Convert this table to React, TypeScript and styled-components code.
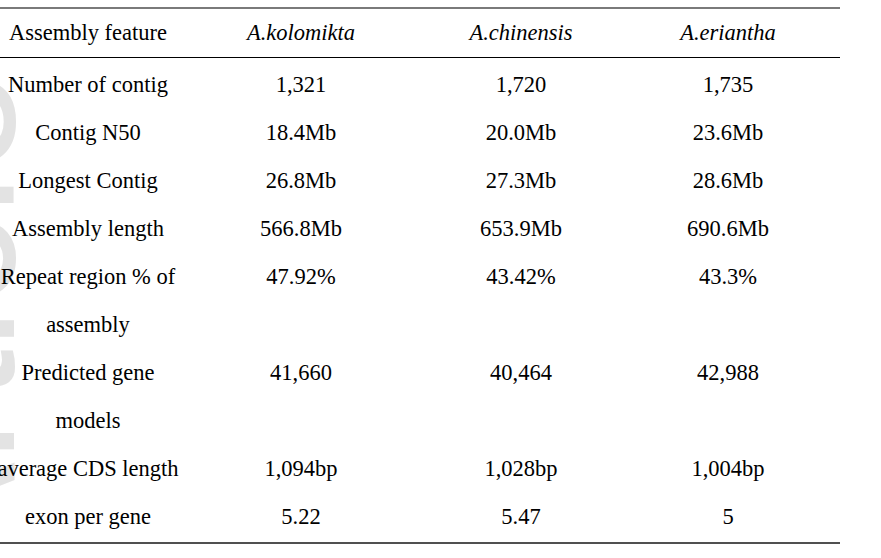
import styled, { createGlobalStyle } from 'styled-components'

const GlobalStyle = createGlobalStyle`
  html, body {
    margin: 0;
    padding: 0;
    background: #ffffff;
    overflow: hidden;
  }
`

type Row = { feature: string[]; values: string[] }

const species = ['A.kolomikta', 'A.chinensis', 'A.eriantha']

const rows: Row[] = [
  { feature: ['Number of contig'], values: ['1,321', '1,720', '1,735'] },
  { feature: ['Contig N50'], values: ['18.4Mb', '20.0Mb', '23.6Mb'] },
  { feature: ['Longest Contig'], values: ['26.8Mb', '27.3Mb', '28.6Mb'] },
  { feature: ['Assembly length'], values: ['566.8Mb', '653.9Mb', '690.6Mb'] },
  { feature: ['Repeat region % of', 'assembly'], values: ['47.92%', '43.42%', '43.3%'] },
  { feature: ['Predicted gene', 'models'], values: ['41,660', '40,464', '42,988'] },
  { feature: ['average CDS length'], values: ['1,094bp', '1,028bp', '1,004bp'] },
  { feature: ['exon per gene'], values: ['5.22', '5.47', '5'] }
]

export default function App() {
  return (
    <>
      <GlobalStyle />
      <Page>
        <Watermark aria-hidden="true">Accepted Article</Watermark>
        <Table>
          <HeaderRow>
            <Cell>
              <Line>Assembly feature</Line>
            </Cell>
            {species.map(name => (
              <Cell key={name}>
                <Line $italic>{name}</Line>
              </Cell>
            ))}
          </HeaderRow>
          <Body>
            {rows.map(row => (
              <BodyRow key={row.feature[0]}>
                <Cell>
                  {row.feature.map(text => (
                    <Line key={text}>{text}</Line>
                  ))}
                </Cell>
                {row.values.map((value, i) => (
                  <Cell key={i}>
                    <Line>{value}</Line>
                  </Cell>
                ))}
              </BodyRow>
            ))}
          </Body>
        </Table>
      </Page>
    </>
  )
}

const Page = styled.div`
  position: relative;
  width: 881px;
  height: 558px;
  padding-top: 7px;
  box-sizing: border-box;
  overflow: hidden;
`

// faint "Accepted Article" stamp running up the left margin, mostly cut off
const Watermark = styled.div`
  position: absolute;
  left: -142px;
  top: 1398px;
  transform-origin: 0 0;
  transform: rotate(-90deg);
  font-family: 'Liberation Sans', sans-serif;
  font-size: 185px;
  line-height: 1;
  white-space: nowrap;
  color: #e3e3e3;
`

const Table = styled.div`
  position: relative;
  width: 840px;
  color: #000000;
`

const HeaderRow = styled.div`
  display: grid;
  grid-template-columns: 176px 250px 190px 224px;
  border-top: 2px solid #7a7a7a;
  border-bottom: 1px solid #000000;
`

const Body = styled.div`
  padding: 3px 0 1px;
  border-bottom: 2px solid #505050;
`

const BodyRow = styled.div`
  display: grid;
  grid-template-columns: 176px 250px 190px 224px;
`

const Cell = styled.div`
  display: flex;
  flex-direction: column;
  align-items: center;
  min-width: 0;
`

const Line = styled.span<{ $italic?: boolean }>`
  display: block;
  font-family: 'Liberation Serif', 'Times New Roman', serif;
  font-size: 22.5px;
  line-height: 48px;
  white-space: nowrap;
  font-style: ${p => (p.$italic ? 'italic' : 'normal')};
`
